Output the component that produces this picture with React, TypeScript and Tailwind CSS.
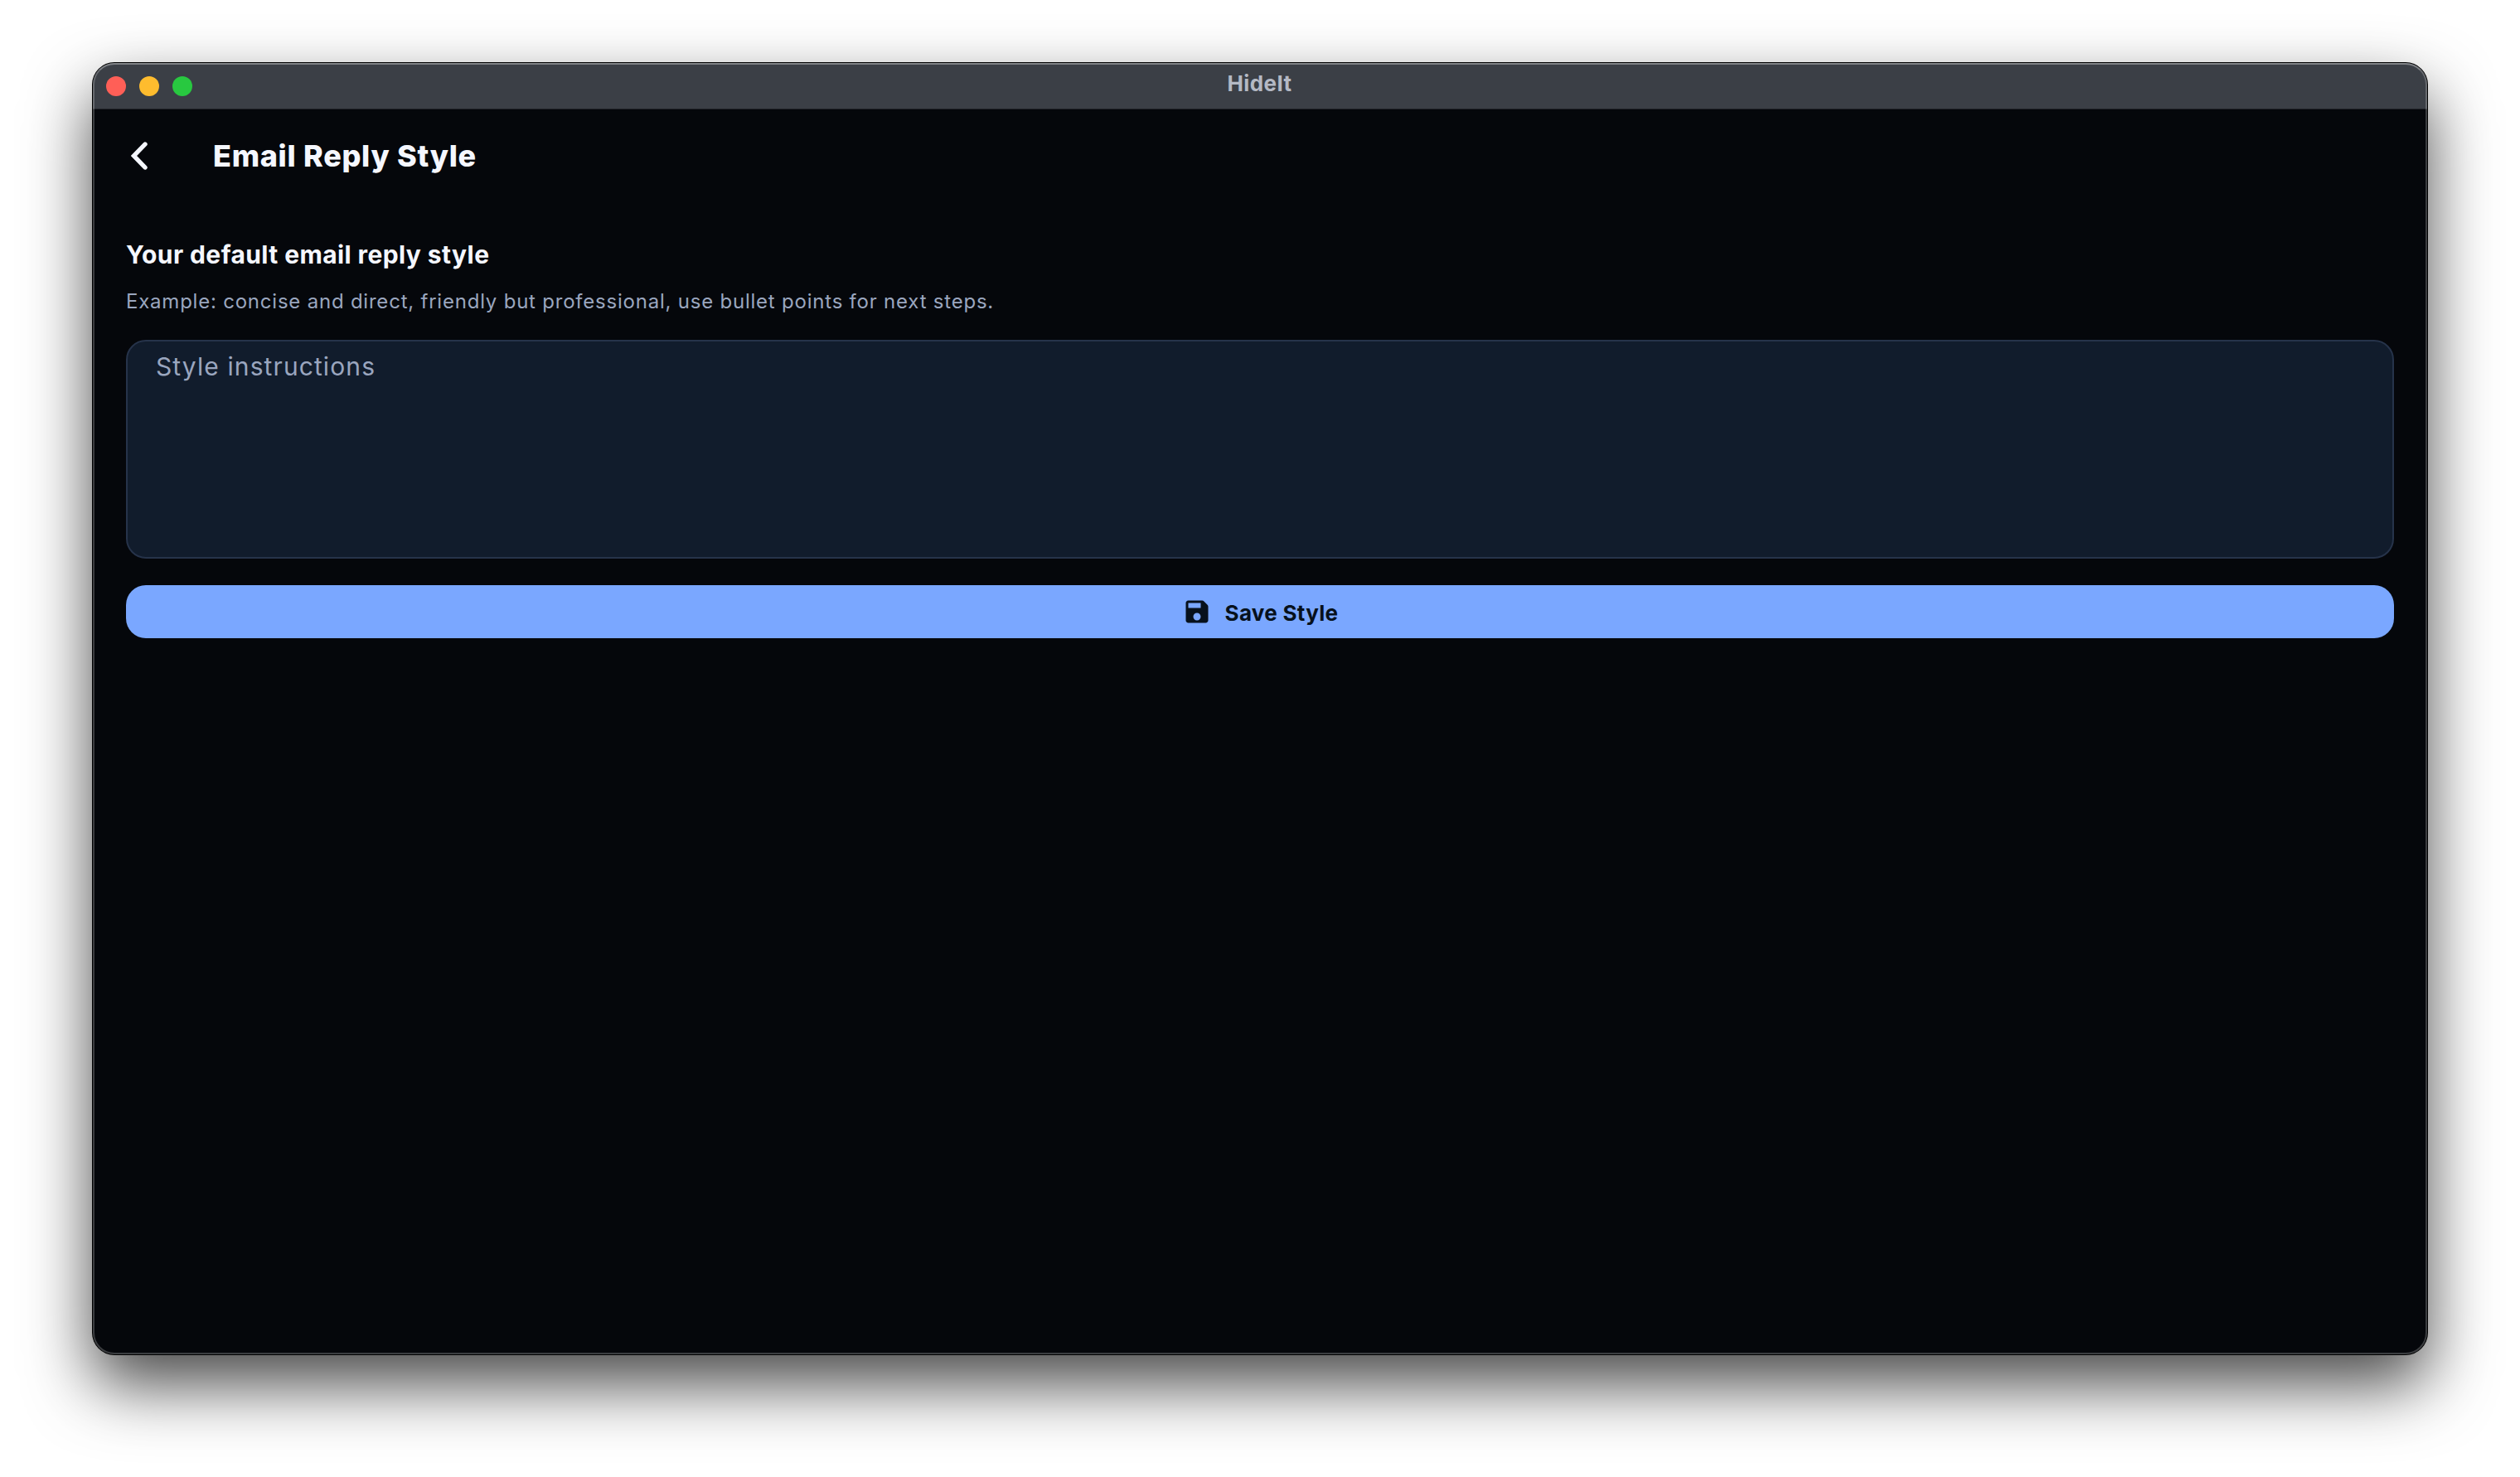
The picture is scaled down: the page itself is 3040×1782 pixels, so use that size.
import React, { useState } from 'react';

const trafficLights = [
  { name: 'close', color: 'bg-[#ff5f57]' },
  { name: 'minimize', color: 'bg-[#febc2e]' },
  { name: 'zoom', color: 'bg-[#28c840]' },
];

const BackIcon: React.FC = () => (
  <svg className="w-5 h-[34px]" viewBox="0 0 20 34" fill="none">
    <path d="M17 3L3.5 17 17 31" stroke="#f5f7ff" strokeWidth="5.4" strokeLinecap="round" strokeLinejoin="miter" />
  </svg>
);

const SaveIcon: React.FC = () => (
  <svg className="w-9 h-9" viewBox="0 0 24 24" fill="currentColor">
    <path d="M17.59 3.59c-.38-.38-.89-.59-1.42-.59H5c-1.11 0-2 .9-2 2v14c0 1.1.9 2 2 2h14c1.1 0 2-.9 2-2V7.83c0-.53-.21-1.04-.59-1.41l-2.82-2.83zM12 19c-1.66 0-3-1.34-3-3s1.34-3 3-3 3 1.34 3 3-1.34 3-3 3zm3-10H5V5h10v4z" />
  </svg>
);

const TitleBar: React.FC = () => (
  <div className="relative h-14 shrink-0 bg-[#3b3f46] border-b border-black/40 flex items-center justify-center">
    <div className="absolute left-4 top-4 flex gap-4">
      {trafficLights.map((light) => (
        <span key={light.name} className={`w-6 h-6 rounded-full ${light.color}`} />
      ))}
    </div>
    <span className="text-[26px] leading-8 font-bold tracking-[0.4px] text-[#b4b9c4] pb-1.5 pr-px">HideIt</span>
  </div>
);

const App: React.FC = () => {
  const [style, setStyle] = useState('');

  return (
    <div className="w-[3040px] h-[1782px] bg-white overflow-hidden px-28 pt-[76px] font-[Inter,sans-serif]">
      <div className="relative h-[1558px] rounded-[26px] bg-[#05070b] shadow-[0_0_0_1px_#000,0_36px_80px_rgba(0,0,0,0.72)]">
        <div className="h-full rounded-[26px] overflow-hidden flex flex-col">
          <TitleBar />

          {/* Header */}
          <header className="h-28 shrink-0 flex items-center pl-[46px]">
            <button aria-label="Back" className="mr-[79px]">
              <BackIcon />
            </button>
            <h1 className="text-[36px] leading-[44px] font-extrabold tracking-[0.7px] text-[#f5f7ff]">
              Email Reply Style
            </h1>
          </header>

          {/* Form */}
          <main className="px-10 pt-[42px] flex flex-col">
            <h2 className="text-[30px] leading-[42px] font-bold tracking-[0.4px] text-[#f5f7ff]">
              Your default email reply style
            </h2>
            <p className="mt-5 text-[24px] leading-8 tracking-[0.78px] text-[#9aa6bf]">
              Example: concise and direct, friendly but professional, use bullet points for next steps.
            </p>
            <textarea
              value={style}
              onChange={(e) => setStyle(e.target.value)}
              placeholder="Style instructions"
              className="mt-[30px] h-[264px] w-full resize-none rounded-3xl border-2 border-[#26334a] bg-[#111c2c] px-[34px] py-2.5 text-[30px] leading-10 tracking-[1.1px] text-[#f5f7ff] placeholder:text-[#9aa6bf] outline-none"
            />
            <button className="mt-8 h-16 rounded-3xl bg-[#7aa7ff] text-[#07111c] flex items-center justify-center gap-4">
              <SaveIcon />
              <span className="pt-[3px] text-[26px] leading-8 font-bold tracking-[0.3px]">Save Style</span>
            </button>
          </main>
        </div>

        {/* Window edge highlight */}
        <div className="absolute inset-0 rounded-[26px] border-2 border-white/22 border-t-white/35 pointer-events-none" />
      </div>
    </div>
  );
};

export default App;
